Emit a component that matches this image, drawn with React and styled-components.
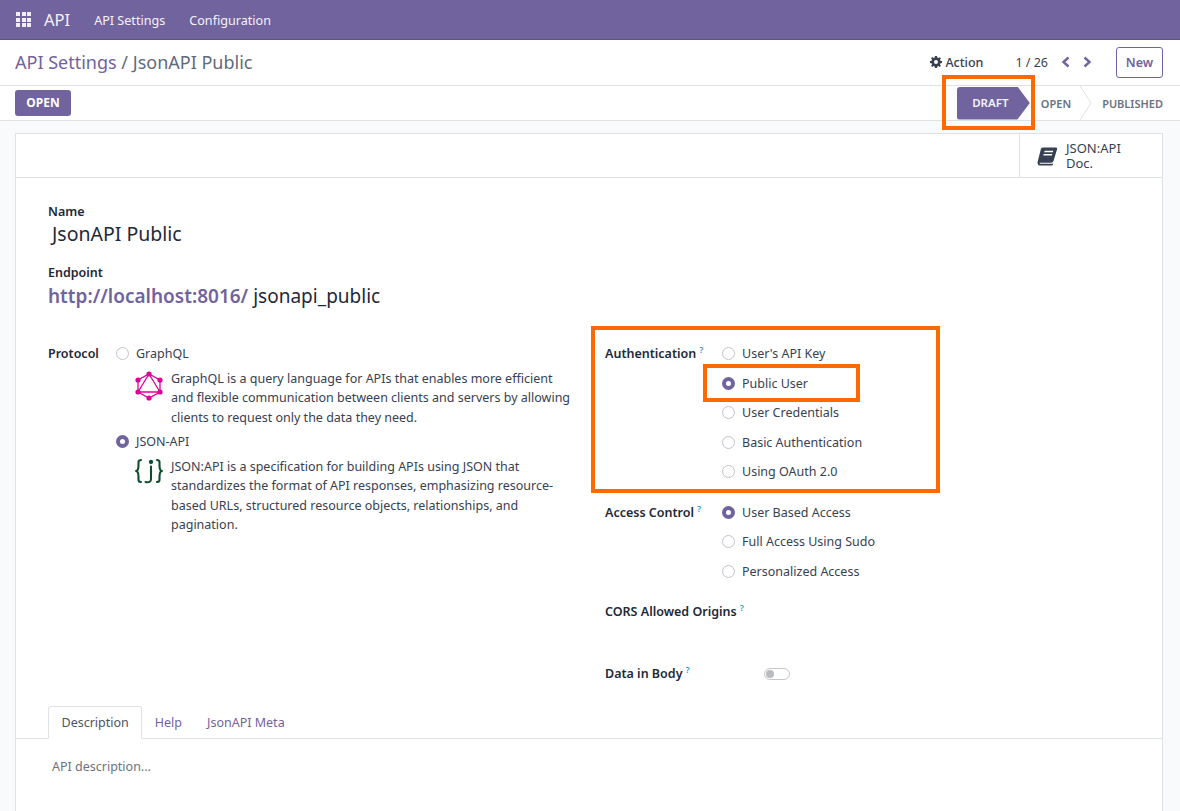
import React from 'react';
import styled, { createGlobalStyle } from 'styled-components';

const GlobalStyle = createGlobalStyle`
  * { box-sizing: border-box; }
  html, body { margin: 0; padding: 0; height: 100%; overflow: hidden; }
  body {
    font-family: "Noto Sans", "Open Sans", sans-serif;
    font-size: 12.5px;
    color: #374151;
    background: #f9fafb;
  }
`;

const purple = '#71639e';

const Page = styled.div`
  position: relative;
  width: 1180px;
  height: 811px;
  overflow: hidden;
`;

const NavBar = styled.header`
  height: 40px;
  background: ${purple};
  border-bottom: 1px solid #5f5387;
  display: flex;
  align-items: center;
  color: #f4f2f8;
  padding: 1px 0 0 16px;
`;

const AppGrid = styled.div`
  display: grid;
  grid-template-columns: repeat(3, 4px);
  grid-auto-rows: 4px;
  gap: 1.5px;
  margin: -1px 13px 0 0;
  span { background: #f0edf6; }
`;

const Brand = styled.span`
  font-size: 16.5px;
  margin: -1px 24px 0 0;
`;

const NavItem = styled.span`
  font-size: 12.6px;
  margin-right: 24px;
`;

const TitleBar = styled.div`
  height: 46px;
  background: #fff;
  border-bottom: 1px solid #dee2e6;
  display: flex;
  align-items: center;
  padding: 0 17px 1px 15px;
`;

const Crumbs = styled.div`
  font-size: 18px;
  flex: 1;
  color: ${purple};
  span { color: #5f6b7a; }
`;

const ActionLink = styled.div`
  display: flex;
  align-items: center;
  gap: 3px;
  font-weight: 500;
  color: #374151;
  margin-right: 32px;
`;

const Pager = styled.div`
  display: flex;
  align-items: center;
  color: #374151;
  margin-right: 24px;
  span { margin-right: 13px; }
  svg { margin-right: 11px; }
  svg:last-child { margin-right: 0; }
`;

const NewButton = styled.button`
  width: 47px;
  height: 31px;
  background: #fff;
  border: 1px solid ${purple};
  border-radius: 3px;
  color: ${purple};
  font: 600 12.5px "Noto Sans", sans-serif;
  padding: 0;
`;

const StatusRow = styled.div`
  height: 35px;
  background: #fff;
  border-bottom: 1px solid #dee2e6;
  display: flex;
  align-items: center;
  justify-content: space-between;
  padding: 0 17px 0 15px;
`;

const OpenButton = styled.button`
  width: 56px;
  height: 26px;
  background: ${purple};
  border: 0;
  border-radius: 3px;
  color: #fff;
  font: 700 12px "Noto Sans", sans-serif;
  padding: 0 0 2px;
`;

const StatusBar = styled.div`
  display: flex;
  align-items: center;
  height: 34px;
  font-size: 11px;
  font-weight: 600;
  color: #6b7280;
`;

const ActiveStage = styled.div`
  width: 73px;
  height: 33px;
  background: ${purple};
  color: #f4f2f8;
  font-size: 11.5px;
  font-weight: 600;
  display: flex;
  align-items: center;
  justify-content: center;
  padding: 0 6px 1px 0;
  border-radius: 3px 0 0 3px;
  clip-path: polygon(0 0, 83% 0, 100% 50%, 83% 100%, 0 100%);
  margin-right: 11px;
`;

const StageChevron = styled.svg`
  margin: 0 10px 0 9px;
`;

const Sheet = styled.main`
  margin: 12px 17px 0 15px;
  background: #fff;
  border: 1px solid #dee2e6;
  border-bottom: 0;
  height: 700px;
`;

const ButtonBox = styled.div`
  height: 44px;
  border-bottom: 1px solid #dee2e6;
  display: flex;
  justify-content: flex-end;
`;

const StatButton = styled.div`
  width: 143px;
  border-left: 1px solid #dee2e6;
  display: flex;
  align-items: center;
  gap: 8px;
  padding-left: 17px;
  font-size: 13px;
  line-height: 15px;
  color: #374151;
`;

const FormBody = styled.div`
  padding: 26px 32px 0;
`;

const FieldLabel = styled.div`
  font-weight: 600;
  color: #1f2937;
  line-height: 16px;
  white-space: nowrap;
  sup {
    font-size: 9px;
    color: #1a9fc0;
    font-weight: 600;
    line-height: 0;
    margin-left: 3px;
    vertical-align: 5px;
  }
`;

const NameValue = styled.div`
  font-size: 19.5px;
  line-height: 27px;
  color: #1f2937;
  padding-left: 4px;
  margin-bottom: 18px;
`;

const EndpointRow = styled.div`
  display: flex;
  align-items: baseline;
  gap: 5px;
  font-size: 19px;
  line-height: 30px;
  color: #1f2937;
  margin-bottom: 28px;
`;

const EndpointHost = styled.span`
  color: ${purple};
  font-weight: 600;
`;

const Columns = styled.div`
  display: grid;
  grid-template-columns: 557px 1fr;
  height: 367px;
`;

const ProtocolField = styled.div`
  display: grid;
  grid-template-columns: 68px 1fr;
  width: 526px;
  align-content: start;
`;

const RadioRow = styled.div`
  display: flex;
  align-items: center;
  gap: 7px;
  height: 29.5px;
  color: #374151;
`;

const RadioDot = styled.span`
  width: 13px;
  height: 13px;
  border-radius: 50%;
  flex: none;
  background: #fff;
  border: ${({ $on }) => ($on ? `4px solid ${purple}` : '1px solid #bfc3c9')};
`;

const ProtocolNote = styled.div`
  display: grid;
  grid-template-columns: 55px 1fr;
  line-height: 19.5px;
  color: #374151;
  svg { margin: 1px 0 0 19px; }
`;

const SettingField = styled.div`
  display: grid;
  grid-template-columns: 117px 1fr;
  margin-bottom: ${({ $gap }) => $gap || 0}px;
`;

const LabelCell = styled.div`
  padding-top: 7px;
`;

const Toggle = styled.span`
  display: block;
  width: 26px;
  height: 12px;
  margin: 2px 0 0 42px;
  border: 1px solid #c4c7cc;
  border-radius: 7px;
  position: relative;
  &::before {
    content: '';
    position: absolute;
    left: 1px;
    top: 1px;
    width: 8px;
    height: 8px;
    border-radius: 50%;
    background: #b8bbbf;
  }
`;

const Tabs = styled.div`
  height: 33px;
  border-bottom: 1px solid #dee2e6;
  display: flex;
  padding-left: 32px;
`;

const Tab = styled.div`
  height: 33px;
  padding: 0 12.5px;
  display: flex;
  align-items: center;
  color: ${({ $active }) => ($active ? '#4b5563' : purple)};
  ${({ $active }) =>
    $active &&
    `
    background: #fff;
    border: 1px solid #dee2e6;
    border-bottom-color: #fff;
    border-radius: 3px 3px 0 0;
  `}
`;

const Placeholder = styled.div`
  padding: 19px 36px;
  color: #6b7280;
`;

const Callout = styled.div`
  position: absolute;
  left: ${({ $x }) => $x}px;
  top: ${({ $y }) => $y}px;
  width: ${({ $w }) => $w}px;
  height: ${({ $h }) => $h}px;
  border: 4px solid #ff6a00;
  pointer-events: none;
`;

const Radio = ({ label, on }) => (
  <RadioRow>
    <RadioDot $on={on} />
    {label}
  </RadioRow>
);

const GraphQLIcon = () => (
  <svg width="28" height="32" viewBox="0 0 28 32" fill="none" stroke="#e10098" strokeWidth="1.3">
    <path d="M14 4 L25 10 V22 L14 28 L3 22 V10 Z" />
    <path d="M14 4 L25 22 H3 Z" />
    <g fill="#e10098" stroke="none">
      <circle cx="14" cy="4" r="2.6" />
      <circle cx="25" cy="10" r="2.6" />
      <circle cx="25" cy="22" r="2.6" />
      <circle cx="14" cy="28" r="2.6" />
      <circle cx="3" cy="22" r="2.6" />
      <circle cx="3" cy="10" r="2.6" />
    </g>
  </svg>
);

const JsonIcon = () => (
  <svg width="28" height="28" viewBox="0 0 28 28" fill="none" stroke="#0b4f2c" strokeWidth="2.1" strokeLinecap="round">
    <path d="M6 2 C3 2 3.5 4 3.5 7 C3.5 10 3.5 12 1.5 13 C3.5 14 3.5 16 3.5 19 C3.5 22 3 24 6 24" />
    <path d="M22 2 C25 2 24.5 4 24.5 7 C24.5 10 24.5 12 26.5 13 C24.5 14 24.5 16 24.5 19 C24.5 22 25 24 22 24" />
    <path d="M16 8.5 V21 C16 24 14 24.8 10.5 24" />
    <circle cx="16" cy="4" r="1.1" fill="#0b4f2c" />
  </svg>
);

const BookIcon = () => (
  <svg width="21" height="20" viewBox="0 0 22 20" fill="#374151">
    <path d="M6 1 H20 C21 1 21.4 1.8 21 2.8 L17.4 15 C17 16.4 16 17 14.8 17 H3.4 C2.8 17 2.6 17.8 3.2 18 H16 L17 17.6 L16.7 19 C16.6 19.6 16 20 15.4 20 H3 C1 20 0.2 18 0.7 16 L4 3 C4.3 1.8 5 1 6 1 Z M8 4.6 L7.6 6 H16.6 L17 4.6 Z M7 8 L6.6 9.4 H15.6 L16 8 Z" fillRule="evenodd" />
  </svg>
);

const GearIcon = () => (
  <svg width="12" height="12" viewBox="0 0 12 12" fill="#374151">
    <path fillRule="evenodd" d="M5 0 H7 L7.3 1.6 L8.4 2.1 L9.8 1.2 L10.9 2.3 L10 3.7 L10.4 4.8 L12 5 V7 L10.4 7.3 L10 8.4 L10.9 9.8 L9.8 10.9 L8.4 10 L7.3 10.4 L7 12 H5 L4.7 10.4 L3.6 10 L2.2 10.9 L1.1 9.8 L2 8.4 L1.6 7.3 L0 7 V5 L1.6 4.7 L2 3.6 L1.1 2.2 L2.2 1.1 L3.6 2 L4.7 1.6 Z M6 4 A2 2 0 1 0 6 8 A2 2 0 1 0 6 4 Z" />
  </svg>
);

const Caret = ({ flip }) => (
  <svg width="10" height="12" viewBox="0 0 10 12" fill="none" stroke={purple} strokeWidth="2.4">
    <path d={flip ? 'M7.5 1.5 L2.5 6 L7.5 10.5' : 'M2.5 1.5 L7.5 6 L2.5 10.5'} />
  </svg>
);

export default function App() {
  return (
    <Page>
      <GlobalStyle />
      <NavBar>
        <AppGrid>
          {Array.from({ length: 9 }, (_, i) => <span key={i} />)}
        </AppGrid>
        <Brand>API</Brand>
        <NavItem>API Settings</NavItem>
        <NavItem>Configuration</NavItem>
      </NavBar>

      <TitleBar>
        <Crumbs>API Settings <span>/ JsonAPI Public</span></Crumbs>
        <ActionLink><GearIcon />Action</ActionLink>
        <Pager>
          <span>1 / 26</span>
          <Caret flip />
          <Caret />
        </Pager>
        <NewButton>New</NewButton>
      </TitleBar>

      <StatusRow>
        <OpenButton>OPEN</OpenButton>
        <StatusBar>
          <ActiveStage>DRAFT</ActiveStage>
          <span>OPEN</span>
          <StageChevron width="12" height="34" viewBox="0 0 12 34" fill="none" stroke="#dee2e6">
            <path d="M0 0 L11 17 L0 34" />
          </StageChevron>
          <span>PUBLISHED</span>
        </StatusBar>
      </StatusRow>

      <Sheet>
        <ButtonBox>
          <StatButton>
            <BookIcon />
            <div>JSON:API<br />Doc.</div>
          </StatButton>
        </ButtonBox>

        <FormBody>
          <FieldLabel>Name</FieldLabel>
          <NameValue>JsonAPI Public</NameValue>
          <FieldLabel>Endpoint</FieldLabel>
          <EndpointRow>
            <EndpointHost>http://localhost:8016/</EndpointHost>
            <span>jsonapi_public</span>
          </EndpointRow>

          <Columns>
            <ProtocolField>
              <LabelCell><FieldLabel>Protocol</FieldLabel></LabelCell>
              <div>
                <Radio label="GraphQL" />
                <ProtocolNote>
                  <GraphQLIcon />
                  <div>GraphQL is a query language for APIs that enables more efficient and flexible communication between clients and servers by allowing clients to request only the data they need.</div>
                </ProtocolNote>
                <Radio label="JSON-API" on />
                <ProtocolNote>
                  <JsonIcon />
                  <div>JSON:API is a specification for building APIs using JSON that standardizes the format of API responses, emphasizing resource-based URLs, structured resource objects, relationships, and pagination.</div>
                </ProtocolNote>
              </div>
            </ProtocolField>

            <div>
              <SettingField $gap={11}>
                <LabelCell><FieldLabel>Authentication<sup>?</sup></FieldLabel></LabelCell>
                <div>
                  <Radio label="User's API Key" />
                  <Radio label="Public User" on />
                  <Radio label="User Credentials" />
                  <Radio label="Basic Authentication" />
                  <Radio label="Using OAuth 2.0" />
                </div>
              </SettingField>
              <SettingField $gap={18}>
                <LabelCell><FieldLabel>Access Control<sup>?</sup></FieldLabel></LabelCell>
                <div>
                  <Radio label="User Based Access" on />
                  <Radio label="Full Access Using Sudo" />
                  <Radio label="Personalized Access" />
                </div>
              </SettingField>
              <SettingField $gap={46}>
                <FieldLabel>CORS Allowed Origins<sup>?</sup></FieldLabel>
              </SettingField>
              <SettingField>
                <FieldLabel>Data in Body<sup>?</sup></FieldLabel>
                <Toggle />
              </SettingField>
            </div>
          </Columns>
        </FormBody>

        <Tabs>
          <Tab $active>Description</Tab>
          <Tab>Help</Tab>
          <Tab>JsonAPI Meta</Tab>
        </Tabs>
        <Placeholder>API description...</Placeholder>
      </Sheet>

      <Callout $x={942} $y={75} $w={93} $h={55} />
      <Callout $x={591} $y={326} $w={349} $h={167} />
      <Callout $x={703} $y={364} $w={157} $h={38} />
    </Page>
  );
}
